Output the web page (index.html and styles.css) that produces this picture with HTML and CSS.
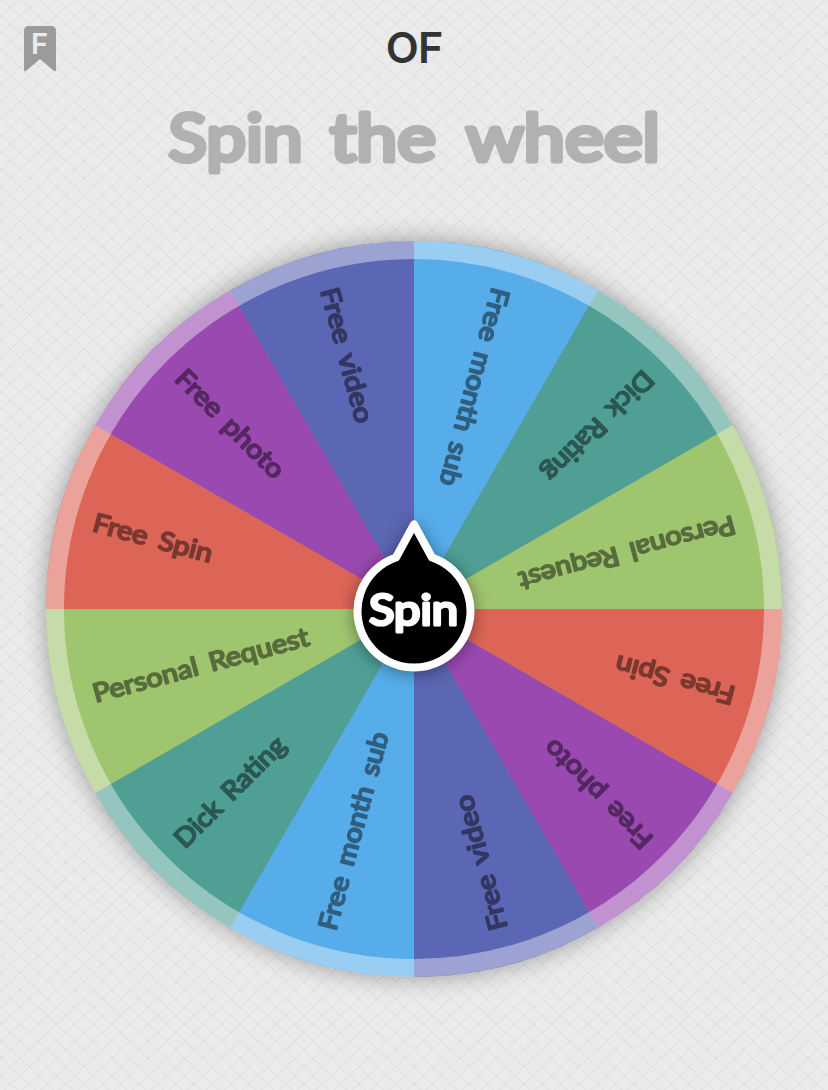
FILE: index.html
```
<!DOCTYPE html>
<html lang="en">

<head>
    <meta charset="utf-8">
    <meta name="viewport" content="width=device-width, initial-scale=1.0">
    <title>Spin the wheel</title>
    <link rel="stylesheet" href="styles.css">
</head>

<body>
    <header>
        <svg class="bookmark" viewBox="0 0 34 48" width="34" height="48">
            <path d="M6 1H28Q33 1 33 6V45Q33 47 31 46L17 34L3 46Q1 47 1 45V6Q1 1 6 1Z" />
            <text x="8" y="28.5">F</text>
        </svg>
        <h1>OF</h1>
    </header>

    <svg class="title" viewBox="0 0 828 102" width="828" height="102">
        <text x="168.5" y="68" textLength="134" lengthAdjust="spacingAndGlyphs">Spin</text>
        <text x="330" y="68" textLength="106" lengthAdjust="spacingAndGlyphs">the</text>
        <text x="466" y="68" textLength="194" lengthAdjust="spacingAndGlyphs">wheel</text>
    </svg>

    <main>
        <svg class="wheel" viewBox="-414 -414 828 828" width="828" height="828">
            <defs>
                <path id="slice" d="M0 0V-368A368 368 0 0 1 184 -318.7Z" />
            </defs>

            <g class="disc">
                <circle r="366" fill="#7b8aa5" />
                <use href="#slice" class="blue" />
                <use href="#slice" class="teal" transform="rotate(30)" />
                <use href="#slice" class="green" transform="rotate(60)" />
                <use href="#slice" class="red" transform="rotate(90)" />
                <use href="#slice" class="purple" transform="rotate(120)" />
                <use href="#slice" class="indigo" transform="rotate(150)" />
                <use href="#slice" class="blue" transform="rotate(180)" />
                <use href="#slice" class="teal" transform="rotate(210)" />
                <use href="#slice" class="green" transform="rotate(240)" />
                <use href="#slice" class="red" transform="rotate(270)" />
                <use href="#slice" class="purple" transform="rotate(300)" />
                <use href="#slice" class="indigo" transform="rotate(330)" />
            </g>
            <circle class="rim" r="359" />

            <g class="labels">
                <text x="-332" y="8" textLength="204" lengthAdjust="spacingAndGlyphs" transform="rotate(105)">Free month sub</text>
                <text x="-332" y="8" textLength="145" lengthAdjust="spacingAndGlyphs" transform="rotate(135)">Dick Rating</text>
                <text x="-332" y="8" textLength="223" lengthAdjust="spacingAndGlyphs" transform="rotate(165)">Personal Request</text>
                <text x="-332" y="8" textLength="123" lengthAdjust="spacingAndGlyphs" transform="rotate(195)">Free Spin</text>
                <text x="-332" y="8" textLength="142" lengthAdjust="spacingAndGlyphs" transform="rotate(225)">Free photo</text>
                <text x="-332" y="8" textLength="139" lengthAdjust="spacingAndGlyphs" transform="rotate(255)">Free video</text>
                <text x="-332" y="8" textLength="204" lengthAdjust="spacingAndGlyphs" transform="rotate(285)">Free month sub</text>
                <text x="-332" y="8" textLength="145" lengthAdjust="spacingAndGlyphs" transform="rotate(315)">Dick Rating</text>
                <text x="-332" y="8" textLength="223" lengthAdjust="spacingAndGlyphs" transform="rotate(345)">Personal Request</text>
                <text x="-332" y="8" textLength="123" lengthAdjust="spacingAndGlyphs" transform="rotate(15)">Free Spin</text>
                <text x="-332" y="8" textLength="142" lengthAdjust="spacingAndGlyphs" transform="rotate(45)">Free photo</text>
                <text x="-332" y="8" textLength="139" lengthAdjust="spacingAndGlyphs" transform="rotate(75)">Free video</text>
            </g>

            <g class="pointer" transform="translate(0 -1.5)">
                <path d="M0 -83L-18 -50A56.5 56.5 0 1 0 18 -50Z" />
                <text x="-45" y="17" textLength="89" lengthAdjust="spacingAndGlyphs">Spin</text>
            </g>
        </svg>
    </main>
</body>

</html>
```
FILE: styles.css
```
* {
    box-sizing: border-box;
}

body {
    margin: 0;
    width: 828px;
    height: 1090px;
    overflow: hidden;
    background-color: #ebebeb;
    background-image:
        repeating-linear-gradient(43deg, transparent 0 11px, rgba(0, 0, 0, 0.03) 11px 12.5px),
        repeating-linear-gradient(-43deg, transparent 0 11px, rgba(0, 0, 0, 0.03) 11px 12.5px);
    font-family: Lato, sans-serif;
}

header {
    display: grid;
    grid-template-columns: 60px 1fr 60px;
    align-items: center;
    height: 93px;
    padding: 0 23px;
}

.bookmark {
    margin-top: 4px;
    fill: #9b9b9b;
}

.bookmark text {
    font-family: Inter, sans-serif;
    font-size: 29px;
    font-weight: 600;
    fill: #ebebeb;
}

h1 {
    margin: 0;
    font-family: Inter, sans-serif;
    font-size: 43px;
    font-weight: 600;
    letter-spacing: -1px;
    text-align: center;
    color: #333;
}

.title {
    display: block;
}

.title text {
    font-size: 65px;
    fill: #b1b1b1;
    stroke: #b1b1b1;
    stroke-width: 5px;
    stroke-linejoin: round;
}

.wheel {
    display: block;
}

.disc {
    filter: drop-shadow(0 0 12px rgba(0, 0, 0, 0.35));
}

.blue {
    fill: #56adea;
}

.teal {
    fill: #4f9f95;
}

.green {
    fill: #a0c56f;
}

.red {
    fill: #dc6557;
}

.purple {
    fill: #9a49b0;
}

.indigo {
    fill: #5b66b4;
}

.rim {
    fill: none;
    stroke: #fff;
    stroke-width: 18px;
    opacity: 0.4;
}

.labels text {
    font-size: 26px;
    word-spacing: 4px;
    fill: #000;
    stroke: #000;
    stroke-width: 1.9px;
    stroke-linejoin: round;
    opacity: 0.45;
}

.pointer {
    filter: drop-shadow(0 2px 8px rgba(0, 0, 0, 0.4));
}

.pointer path {
    fill: #000;
    stroke: #fff;
    stroke-width: 8px;
    stroke-linejoin: round;
}

.pointer text {
    font-size: 42px;
    fill: #fff;
    stroke: #fff;
    stroke-width: 3.2px;
    stroke-linejoin: round;
}
```
